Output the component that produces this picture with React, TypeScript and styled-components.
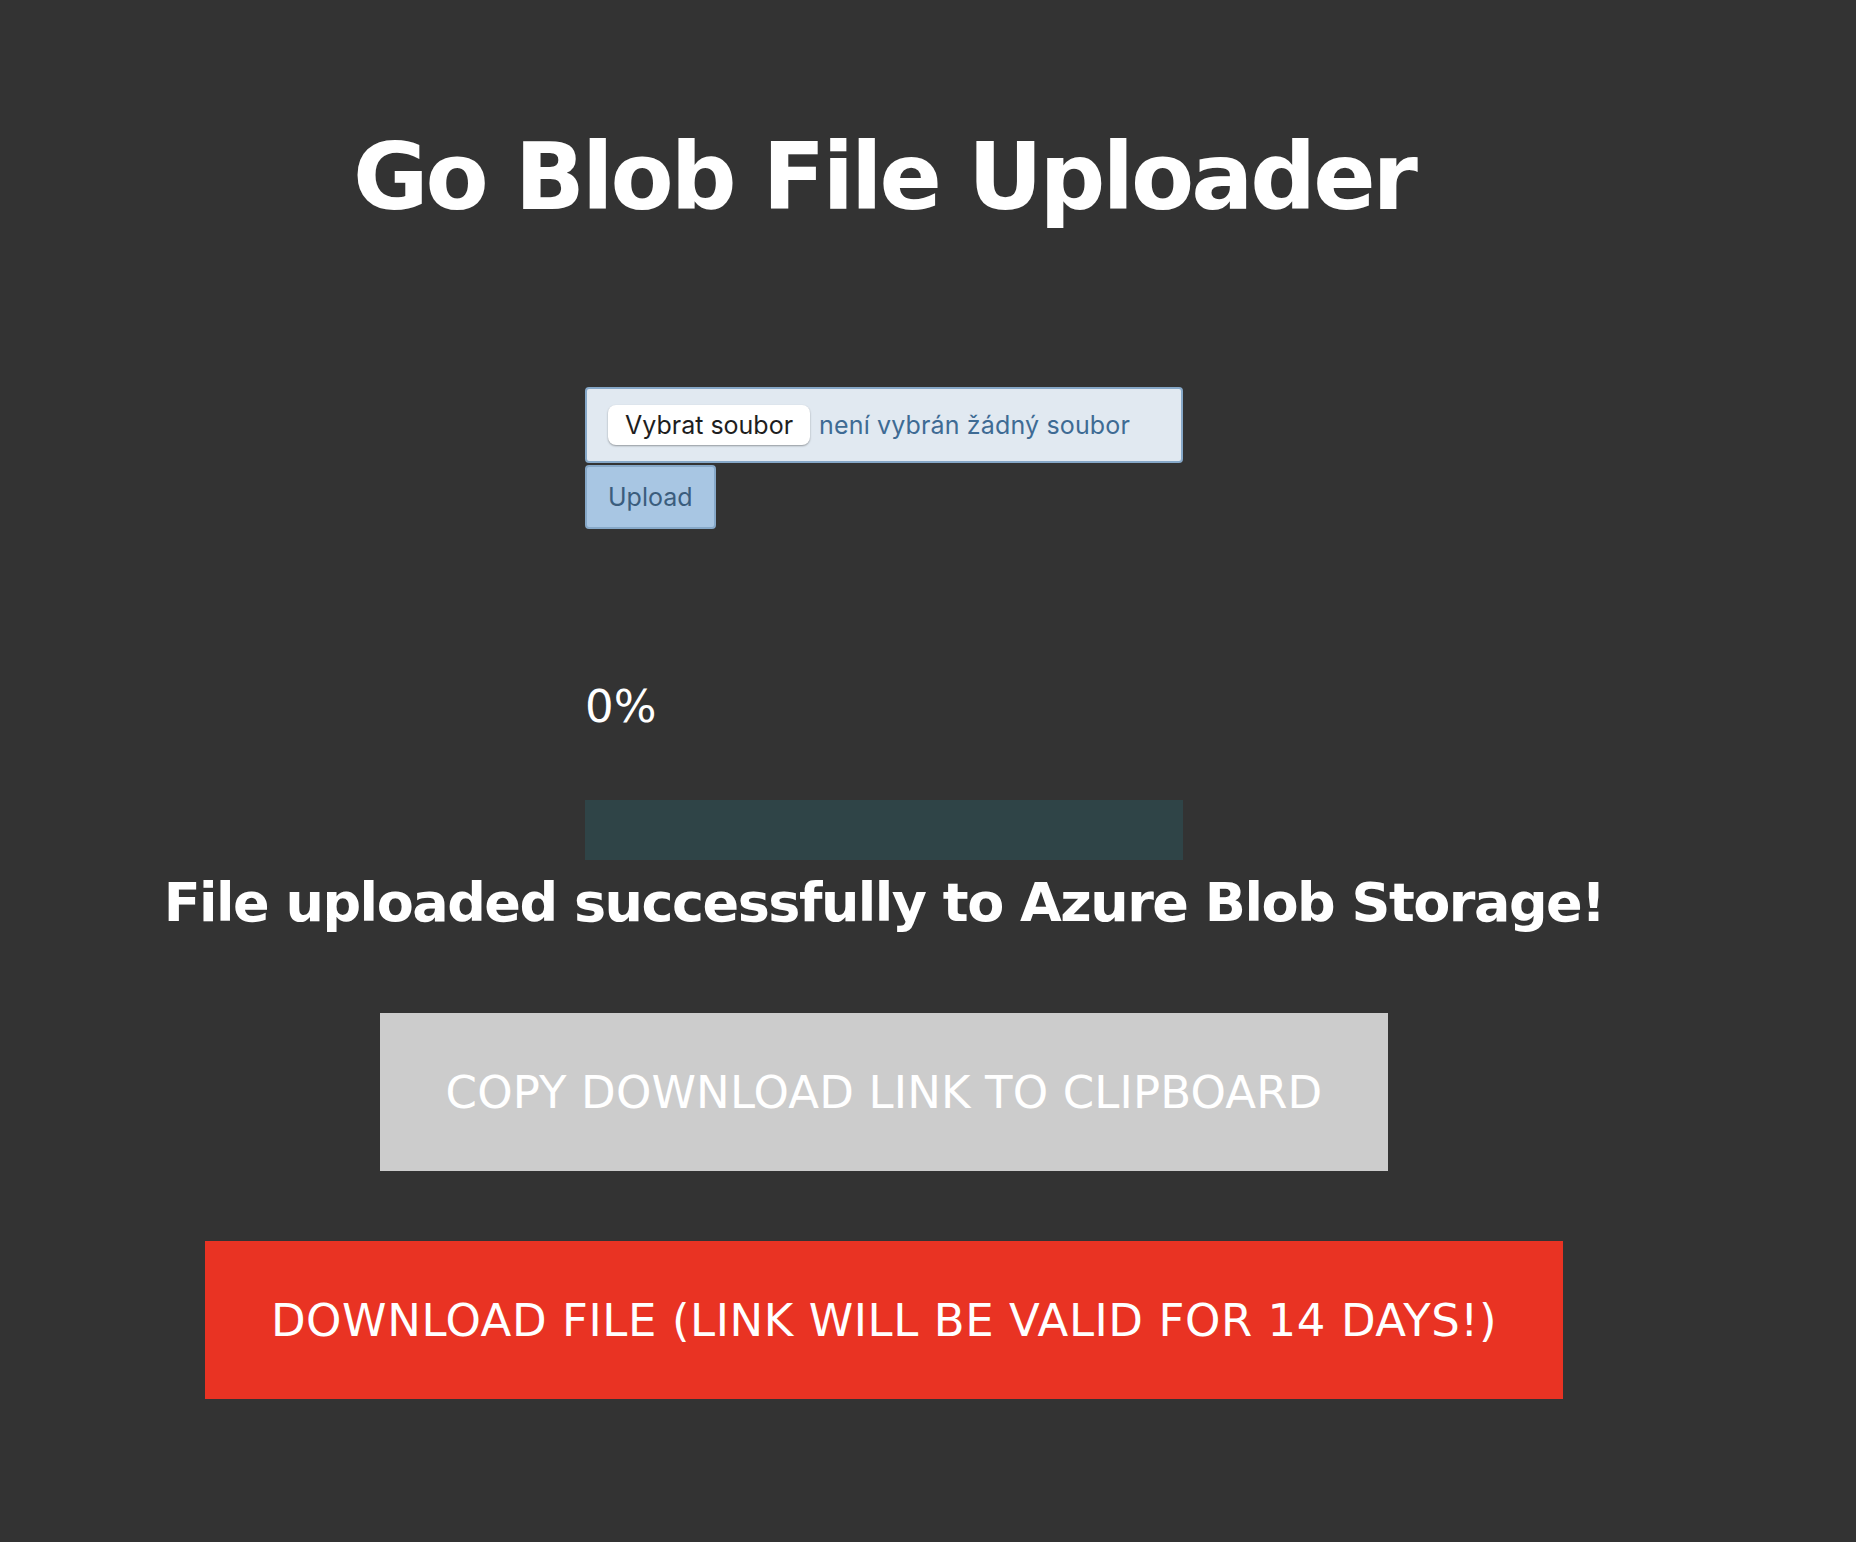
import React from "react";
import styled, { createGlobalStyle } from "styled-components";

const GlobalStyle = createGlobalStyle`
  html, body {
    margin: 0;
    padding: 0;
    background: #333333;
  }
`;

const Page = styled.main`
  width: 1768px;
  min-height: 1542px;
  display: flex;
  flex-direction: column;
  align-items: center;
  padding-top: 132px;
  box-sizing: border-box;
  font-family: "DejaVu Sans", Verdana, sans-serif;
  color: #ffffff;
`;

const Title = styled.h1`
  margin: 0;
  font-size: 92px;
  line-height: 92px;
  font-weight: 700;
  letter-spacing: -3px;
  white-space: nowrap;
`;

const Form = styled.form`
  width: 598px;
  margin-top: 163px;
  display: flex;
  flex-direction: column;
  align-items: flex-start;
`;

const FileBox = styled.label`
  width: 100%;
  height: 76px;
  box-sizing: border-box;
  display: flex;
  align-items: center;
  gap: 9px;
  padding: 0 21px;
  background: #e1e9f1;
  border: 2px solid #86a8c8;
  border-radius: 4px;
  font-family: Inter, "Liberation Sans", Arial, sans-serif;
  font-size: 25px;
`;

const PickButton = styled.span`
  height: 40px;
  display: inline-flex;
  align-items: center;
  padding: 0 17px;
  background: #ffffff;
  color: #1e1e1e;
  border-radius: 8px;
  box-shadow: 0 1px 2px rgba(0, 0, 0, 0.35);
  white-space: nowrap;
`;

const FileName = styled.span`
  color: #3e6b94;
  white-space: nowrap;
  letter-spacing: 0.15px;
`;

const UploadButton = styled.button`
  margin-top: 2px;
  height: 64px;
  padding: 0 21px;
  background: #a8c6e3;
  color: #3b5d7d;
  border: 2px solid #86a8c8;
  border-radius: 4px;
  font-family: Inter, "Liberation Sans", Arial, sans-serif;
  font-size: 25px;
`;

const Percent = styled.div`
  margin-top: 155px;
  font-size: 45px;
  line-height: 45px;
`;

const ProgressTrack = styled.div`
  margin-top: 71px;
  width: 100%;
  height: 60px;
  background: #2f4447;
`;

const ProgressFill = styled.div`
  height: 100%;
  background: #4caf50;
`;

const Success = styled.h2`
  margin: 16px 0 0;
  font-size: 54px;
  line-height: 54px;
  font-weight: 700;
  letter-spacing: -1.5px;
  white-space: nowrap;
`;

const ActionButton = styled.button<{ $bg: string; $gap: number; $spacing: number }>`
  margin-top: ${({ $gap }) => $gap}px;
  height: 158px;
  padding: 0 66px;
  border: none;
  background: ${({ $bg }) => $bg};
  color: #ffffff;
  font-family: "DejaVu Sans", Verdana, sans-serif;
  font-size: 45px;
  letter-spacing: ${({ $spacing }) => $spacing}px;
  white-space: nowrap;
`;

export default function App() {
  const progress = 0;
  return (
    <>
      <GlobalStyle />
      <Page>
        <Title>Go Blob File Uploader</Title>
        <Form onSubmit={(e) => e.preventDefault()}>
          <FileBox>
            <PickButton>Vybrat soubor</PickButton>
            <FileName>není vybrán žádný soubor</FileName>
          </FileBox>
          <UploadButton type="submit">Upload</UploadButton>
          <Percent>{progress}%</Percent>
          <ProgressTrack>
            <ProgressFill style={{ width: `${progress}%` }} />
          </ProgressTrack>
        </Form>
        <Success>File uploaded successfully to Azure Blob Storage!</Success>
        <ActionButton $bg="#cccccc" $gap={83} $spacing={0.15}>
          COPY DOWNLOAD LINK TO CLIPBOARD
        </ActionButton>
        <ActionButton $bg="#e93323" $gap={70} $spacing={0.57}>
          DOWNLOAD FILE (LINK WILL BE VALID FOR 14 DAYS!)
        </ActionButton>
      </Page>
    </>
  );
}
